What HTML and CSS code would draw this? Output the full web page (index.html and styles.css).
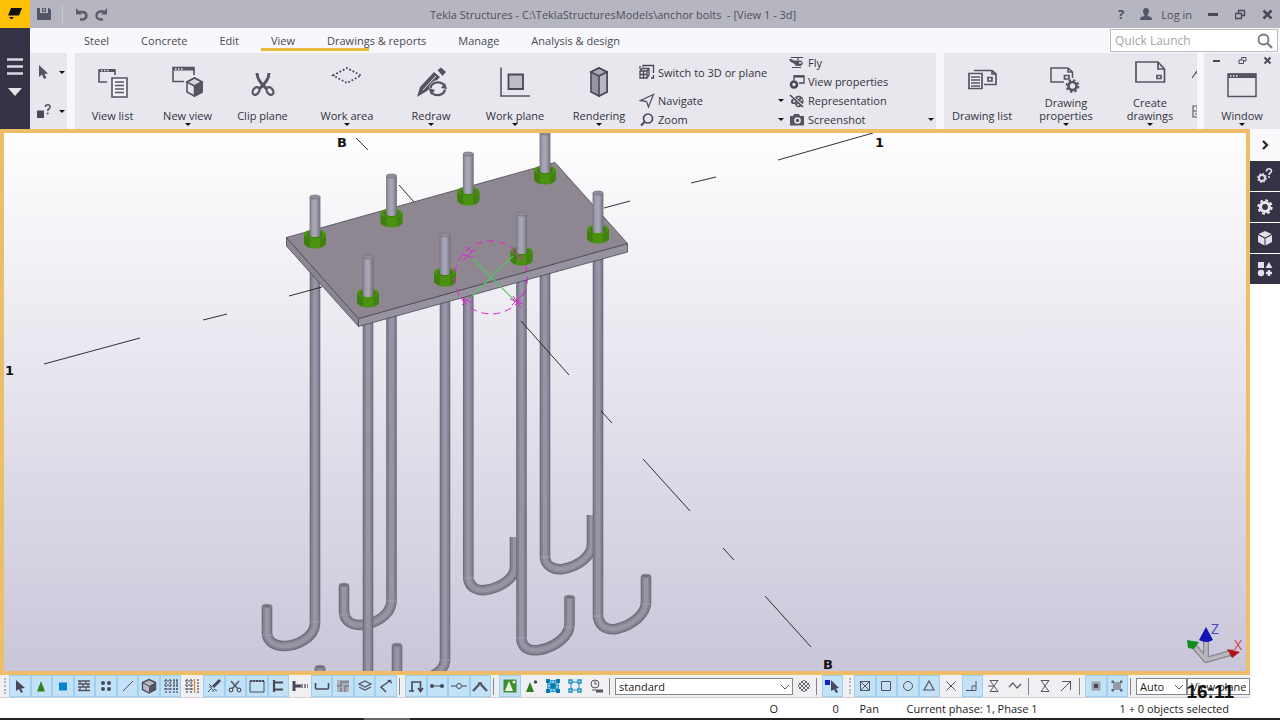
FILE: index.html
```html
<!DOCTYPE html>
<html lang="en">
<head>
<meta charset="utf-8">
<title>Tekla Structures</title>
<link rel="stylesheet" href="styles.css">
</head>
<body>
<header class="top">
  <div class="rail">
    <div class="logo"><svg width="16" height="14" viewBox="0 0 16 14"><path d="M4 1H15L12 8.500H1Z M2 10H7L4.500 12.500Z" fill="#111"/></svg></div>
    <button class="menu" aria-label="Menu"><svg width="16" height="42" viewBox="0 0 16 42"><path d="M0 1.500H16M0 8.500H16M0 15.500H16" stroke="#d8d8e2" stroke-width="2.600"/><path d="M1 30H15L8 38Z" fill="#e4e4ec"/></svg></button>
  </div>
  <div class="head">
    <div class="titlebar">
      <div class="quick">
        <button aria-label="Save"><svg width="14" height="14" viewBox="0 0 14 14"><path d="M0 1H3V6H11V1H12L14 3V13H0Z M5 1H9V5H5Z" fill="#55556a"/><path d="M7 1.500V4" stroke="#b6b6c1" stroke-width="1.500"/></svg></button>
        <i class="tsep"></i>
        <button aria-label="Undo"><svg width="14" height="14" viewBox="0 0 14 14"><path d="M3 5H8A4 3.800 0 0 1 8 12.500H5" fill="none" stroke="#5c5c6c" stroke-width="2.400"/><path d="M1 1L1 7.500L7 7.500Z" fill="#5c5c6c"/></svg></button>
        <button aria-label="Redo"><svg width="14" height="14" viewBox="0 0 14 14"><path d="M10 4.500H7A4 4 0 0 0 6 12.500H9" fill="none" stroke="#5c5c6c" stroke-width="2.400"/><path d="M13 1L13 7.500L7 7.500Z" fill="#5c5c6c"/></svg></button>
      </div>
      <h1 class="title">Tekla Structures - C:\TeklaStructuresModels\anchor bolts&nbsp; - [View 1 - 3d]</h1>
      <div class="account">
        <button class="help">?</button>
        <button class="login"><svg width="12" height="12" viewBox="0 0 12 12"><path d="M6 0C8 0 9 1.500 9 3.500C9 5 8 6 7.500 7V8L11 9Q12 10 12 12H0Q0 10 1 9L4.500 8V7C4 6 3 5 3 3.500C3 1.500 4 0 6 0Z" fill="#55556a"/></svg><span>Log in</span></button>
        <button class="win" aria-label="Minimize"><svg width="11" height="11"><path d="M0 5.500H10" stroke="#484858" stroke-width="3"/></svg></button>
        <button class="win" aria-label="Restore"><svg width="11" height="11"><path d="M.5 4.500H6.500V9.500H.5ZM3.500 4V1.500H9.500V6.500H7" fill="none" stroke="#484858" stroke-width="1.400"/></svg></button>
        <button class="win" aria-label="Close"><svg width="11" height="11"><path d="M1.500 1.500L9.500 9.500M9.500 1.500L1.500 9.500" stroke="#484858" stroke-width="2.600"/></svg></button>
      </div>
    </div>
    <div class="tabbar">
      <nav class="tabs">
        <a href="#">Steel</a><a href="#">Concrete</a><a href="#">Edit</a><a href="#" class="on">View</a><a href="#">Drawings &amp; reports</a><a href="#">Manage</a><a href="#">Analysis &amp; design</a>
      </nav>
      <label class="search"><input type="text" placeholder="Quick Launch" aria-label="Quick Launch"><svg width="16" height="16" viewBox="0 0 16 16"><circle cx="6.500" cy="6.500" r="5" fill="none" stroke="#777784" stroke-width="1.800"/><path d="M10.500 10.500L15 15" stroke="#777784" stroke-width="2"/></svg></label>
    </div>
    <div class="ribbon">
      <div class="panel pick">
        <button aria-label="Select"><svg width="14" height="16" viewBox="0 0 14 16"><path d="M3 1L12 9.500L8.500 10L10.500 14L8 15L6 10.500L3 13Z" fill="#555562"/></svg><i class="arr"></i></button>
        <button aria-label="Inquire"><svg width="16" height="16" viewBox="0 0 16 16"><path d="M1 7.500H8V15H1Z" fill="#484858"/><path d="M9.500 4C9.500 1 14 1 14 4C14 6 11.700 5.500 11.700 8" fill="none" stroke="#555562" stroke-width="1.600"/><circle cx="11.700" cy="10.500" r="1" fill="#555562"/></svg><i class="arr"></i></button>
      </div>
      <div class="panel views">
        <div class="bigs three">
          <button class="big"><svg viewBox="0 0 36 36"><g fill="none" stroke="#555562" stroke-width="1.600"><path d="M12 21H4V9H20V14"/><path d="M4 9.500H20" stroke-width="3"/><path d="M6 9.500H15" stroke="#e8e7ee" stroke-dasharray="1.500 1.500"/><path d="M17 17H32V36H17Z" fill="#f1f1f5"/><path d="M20 21H29M20 24.500H29M20 28H29M20 31.500H29"/></g></svg><span>View list</span><i></i></button>
          <button class="big"><svg viewBox="0 0 36 36"><g fill="none" stroke="#555562" stroke-width="1.600"><path d="M14 20.500H3V6.500H24V14"/><path d="M3 8H24" stroke-width="3"/><path d="M5 8H13" stroke="#e8e7ee" stroke-dasharray="1.500 1.500"/><path d="M24.500 17L32 21V31L24.500 35L17 31V21Z" fill="#e8e7ee"/><path d="M17 21L24.500 25L32 21L24.500 17Z" fill="#d6d6df"/><path d="M24.500 25L32 21V31L24.500 35Z" fill="#555562"/></g></svg><span>New view</span><i class="arr"></i></button>
          <button class="big"><svg viewBox="0 0 36 36"><g fill="none" stroke="#555562"><path d="M12 12C12 17 16 23 22 28M24 12C24 17 20 23 14 28" stroke-width="3"/><ellipse cx="11" cy="30" rx="3" ry="4.200" stroke-width="2.200" transform="rotate(35 11 30)"/><ellipse cx="25" cy="30" rx="3" ry="4.200" stroke-width="2.200" transform="rotate(-35 25 30)"/></g></svg><span>Clip plane</span><i></i></button>
        </div>
        <div class="bigs four">
          <button class="big"><svg viewBox="0 0 36 36"><path d="M4 14.500L18 7L32 14.500L18 22Z" fill="none" stroke="#484858" stroke-width="1.800" stroke-dasharray="1.800 1.900"/></svg><span>Work area</span><i class="arr"></i></button>
          <button class="big"><svg viewBox="0 0 36 36"><path d="M4 36L7 26L21 11L27 16L14 30Z" fill="#555562"/><path d="M10 29L23 15" stroke="#e8e7ee" stroke-width="1"/><path d="M24.500 9L28 6.500L33 11L29.500 15Z" fill="#555562"/><circle cx="25" cy="28" r="9" fill="#e8e7ee"/><path d="M17.500 27A7.500 6.500 0 0 1 31 24M32 28.500A7.500 6.500 0 0 1 19 32" fill="none" stroke="#555562" stroke-width="2.200"/><path d="M28 27L34 28L32 22Z M22 29L15.500 27L18 34Z" fill="#555562"/></svg><span>Redraw</span><i class="arr"></i></button>
          <button class="big"><svg viewBox="0 0 36 36"><path d="M4 6.500V35H33" fill="none" stroke="#555562" stroke-width="1.600"/><path d="M11.500 13.500H26V28H11.500Z" fill="#bcbcc8" stroke="#484858" stroke-width="1.800"/></svg><span>Work plane</span><i class="arr"></i></button>
          <button class="big"><svg viewBox="0 0 36 36"><g stroke="#484858" stroke-width="1.600"><path d="M18 7L26 11V31L18 35L10 31V11Z" fill="#9494a3"/><path d="M18 7L26 11L18 15L10 11Z" fill="#aaaab7"/><path d="M18 15L26 11V31L18 35Z" fill="#b7b7c3"/></g></svg><span>Rendering</span><i class="arr"></i></button>
        </div>
        <div class="smalls nav">
          <button class="small tall"><svg viewBox="0 0 16 16"><g fill="none" stroke="#484858" stroke-width="1.300"><path d="M4 3V1.500H14.500V9M14.500 11V14H12"/><path d="M1 7H8V14H1ZM1 7L3 4.500H10V11L8 14M8 7L10 4.500"/><path d="M1 10.500H8M4.500 7V14M1 5V2"/></g></svg><span>Switch to 3D or plane</span></button>
          <button class="small"><svg viewBox="0 0 16 16"><path d="M14.500 1.500L9.500 14L7.500 8.500L1.500 7.500Z" fill="none" stroke="#555562" stroke-width="1.300"/></svg><span>Navigate</span><i class="arr"></i></button>
          <button class="small"><svg viewBox="0 0 16 16"><circle cx="9" cy="6.500" r="4.500" fill="none" stroke="#484858" stroke-width="1.700"/><path d="M5.500 10L2 13.500" stroke="#484858" stroke-width="2.200"/></svg><span>Zoom</span><i class="arr"></i></button>
        </div>
        <div class="smalls more">
          <button class="small"><svg viewBox="0 0 16 16"><path d="M2 2.500H14M9 2V5" stroke="#484858" stroke-width="1.200"/><path d="M1 4L5 6H12Q15 8 12 10.500H7L5 8L1 6ZM3 12.500H12" fill="#555562" stroke="#555562"/><path d="M10 7H12.500V8.500H10Z" fill="#e8e7ee"/></svg><span>Fly</span></button>
          <button class="small"><svg viewBox="0 0 16 16"><path d="M5 6V2H15V9H10" fill="none" stroke="#484858" stroke-width="1.300"/><path d="M5 2.500H15" stroke="#484858" stroke-width="2"/><circle cx="5" cy="10.500" r="3" fill="none" stroke="#484858" stroke-width="2.600"/></svg><span>View properties</span></button>
          <button class="small"><svg viewBox="0 0 16 16"><path d="M8 3C12 2 15 5 14.500 9C14 13 11 15 8 14C6 13 7 11 5 11C2 11 1 9 3 6Z" fill="#555562"/><path d="M1 2L15 14" stroke="#e8e7ee" stroke-width="2.600"/><path d="M1 2L14 14" stroke="#484858" stroke-width="1.600"/><g fill="#e8e7ee"><circle cx="9.500" cy="5" r="1"/><circle cx="12.500" cy="7" r="1"/><circle cx="5" cy="8.500" r="1"/><circle cx="9" cy="12" r="1"/></g></svg><span>Representation</span></button>
          <button class="small"><svg viewBox="0 0 16 16"><path d="M1 4H4L5 2H10L11 4H15V13.500H1Z" fill="#555562"/><circle cx="8.500" cy="8.500" r="3.300" fill="#e8e7ee"/><circle cx="8.500" cy="8.500" r="1.700" fill="#555562"/></svg><span>Screenshot</span><i class="arr"></i></button>
        </div>
      </div>
      <div class="panel drawings">
        <button class="big list"><svg viewBox="0 0 36 36"><g fill="none" stroke="#555562" stroke-width="1.700"><path d="M10 9.500H28L32 13V23.500H20"/><path d="M5 12.500H18V27.500H5Z" fill="#f1f1f5"/><path d="M7 16H16M7 19H16M7 22H16M7 25H16" stroke-width="1.400"/><path d="M24 16.500H28V20H24ZM28 10V13H32"/></g></svg><span>Drawing list</span><i></i></button>
        <button class="big"><svg viewBox="0 0 36 36"><g fill="none" stroke="#555562" stroke-width="1.500"><path d="M16 21H3V7H20L24.500 11V17M20 7V11H24"/><path d="M16.500 14.500H21V18H16.500Z" stroke-width="1.700"/><circle cx="24.500" cy="25" r="4" stroke-width="2.700"/><circle cx="24.500" cy="25" r="6" stroke-width="1.800" stroke-dasharray="2.400 2.300"/></g></svg><span>Drawing<br>properties</span><i class="arr"></i></button>
        <button class="big"><svg viewBox="0 0 36 36"><g fill="none" stroke="#555562" stroke-width="1.700"><path d="M4 1H26L32.500 8V21H4ZM26 1V8H32"/><path d="M25 14.500H29V17.500H25Z"/></g></svg><span>Create<br>drawings</span><i class="arr"></i></button>
        <div class="cut"><svg width="7" height="16" viewBox="0 0 7 16"><path d="M0 11L5 4M3 6H7M5 3L7 1M5 7L7 9" fill="none" stroke="#555562" stroke-width="1.100"/></svg><svg width="7" height="16" viewBox="0 0 7 16"><path d="M7 3H1V14H7M1 8H7M3 11H7M4 5H7" fill="none" stroke="#555562" stroke-width="1.100"/></svg></div>
      </div>
      <div class="panel window">
        <div class="mdi">
          <button aria-label="Minimize view"><svg width="9" height="9"><path d="M1 5H8" stroke="#484858" stroke-width="2"/></svg></button>
          <button aria-label="Restore view"><svg width="9" height="9"><path d="M1 4H5.500V7.500H1ZM3.500 3.500V1.500H8V5H6" fill="none" stroke="#484858"/></svg></button>
          <button aria-label="Close view"><svg width="9" height="9"><path d="M1.500 1.500L7.500 7.500M7.500 1.500L1.500 7.500" stroke="#484858" stroke-width="2"/></svg></button>
        </div>
        <button class="big"><svg viewBox="0 0 36 36"><path d="M4 13H32V35.500H4Z" fill="none" stroke="#555562" stroke-width="1.500"/><path d="M4 12.500H32V17H4Z" fill="#555562"/><path d="M6 15H14" stroke="#e8e7ee" stroke-width="1.500" stroke-dasharray="1.500 1.500"/></svg><span>Window</span><i class="arr"></i></button>
      </div>
    </div>
  </div>
</header>
<main class="work">
  <div class="left">
    <section class="viewport" aria-label="View 1 - 3d">
      <svg class="scene">
        <defs>
          <g id="nut"><path d="M-11 -5V4A11 5.500 0 0 0 11 4V-5Z" fill="#4a9212"/><path d="M-11 -5V4A11 5.500 0 0 0 -5 8.500V-3Z" fill="#3f7f10"/><path d="M5 -3V8.500A11 5.500 0 0 0 11 4V-5Z" fill="#418211"/><ellipse cy="-5" rx="11" ry="4.500" fill="#4a9313"/><ellipse cy="-4.500" rx="8" ry="3.500" fill="#3d7a10"/></g>
          <linearGradient id="rod" x1="0" x2="1"><stop offset="0" stop-color="#76727f"/><stop offset=".25" stop-color="#a09dae"/><stop offset=".55" stop-color="#aaa7b8"/><stop offset=".8" stop-color="#8c8998"/><stop offset="1" stop-color="#6d6977"/></linearGradient>
          <g id="stud"><path d="M-5.400 -42V-4A5.400 2 0 0 0 5.400 -4V-42Z" fill="url(#rod)"/><ellipse cy="-42" rx="5.200" ry="2" fill="#918e9c" stroke="#777382" stroke-width=".8"/></g>
          <g id="back"><path d="M315 245V624C314 638 296 646 284 646C273 646 267 640 267 633V606"/><path d="M391.500 225V602C390 617 372 625 360 625C349 625 344 619 344 611V585"/><path d="M545 180V558C546 567 555 570 563 569C580 566 592 555 592 544V515"/><path d="M468.300 200V579C470 588 478 591 485 590C501 588 515 578 515 567V537"/></g>
          <g id="front"><path d="M320 676V667"/><path d="M397 676V645"/><path d="M368 300V680"/><path d="M445 280V661C444 669 438 673 430 677"/><path d="M521.500 260V640C523 650 532 651 539 650C556 647 569.500 636 569.500 624V597"/><path d="M598 240V617C600 628 609 630 616 629C634 625 646 613 646 602V576"/></g>
        </defs>
        <g transform="translate(-4 -133)">
          <g fill="none">
            <use href="#back" stroke="#6d6a78" stroke-width="10.600"/><use href="#back" stroke="#858191" stroke-width="8.400"/><use href="#back" stroke="#9794a5" stroke-width="4.500"/>
            <use href="#front" stroke="#6d6a78" stroke-width="10.600"/><use href="#front" stroke="#858191" stroke-width="8.400"/><use href="#front" stroke="#9794a5" stroke-width="4.500"/>
          </g>
          <g fill="#77737e" stroke="#9c99a8" stroke-width=".5"><ellipse cx="267" cy="606" rx="5" ry="2"/><ellipse cx="344" cy="585" rx="5" ry="2"/><ellipse cx="320" cy="667" rx="5" ry="2"/><ellipse cx="397" cy="645" rx="5" ry="2"/><ellipse cx="569.500" cy="597" rx="5" ry="2"/><ellipse cx="646" cy="576" rx="5" ry="2"/></g>
          <path d="M310 622H320M262 635H272M386 601H397M339 615H349M463 578H474M540 557H551M516 638H527M593 616H604M564 627H575M641 604H652M440 660H450" stroke="#aaa7b8" stroke-width=".7"/>
          <g stroke="#4a4652" stroke-width=".8" stroke-linejoin="round"><path d="M286.500 237.500L358.500 318.500V326.500L286.500 246Z" fill="#8a8692"/><path d="M358.500 318.500L627.500 243.500V252L358.500 326.500Z" fill="#9692a0"/><path d="M286.500 237.500L555 162.500L627.500 243.500L358.500 318.500Z" fill="#8e8791"/></g>
          <path d="M44 364L140 338M203 320L227 314M289 296L322 287M604 208L630 201M691 183L716 177M778 160L873 133M356 138L368 150M399 185L414 202M521 321L569 375M601 411L612 423M643 459L690 511M723 548L734 560M765 596L811 647" stroke="#1c1c20" stroke-width=".9"/>
          <use href="#nut" x="315" y="239"/><use href="#stud" x="315" y="239"/>
          <use href="#nut" x="391.500" y="218"/><use href="#stud" x="391.500" y="218"/>
          <use href="#nut" x="468.300" y="196"/><use href="#stud" x="468.300" y="196"/>
          <use href="#nut" x="545" y="175"/><use href="#stud" x="545" y="175"/>
          <use href="#nut" x="368" y="298"/><use href="#stud" x="368" y="299"/>
          <use href="#nut" x="445" y="277"/><use href="#stud" x="445" y="277"/>
          <use href="#nut" x="521.500" y="256"/><use href="#stud" x="521.500" y="256"/>
          <use href="#nut" x="598" y="234"/><use href="#stud" x="598" y="235"/>
          <path d="M469 255L517 303M513 256L469 299" stroke="#4fc95a" stroke-width="1.100"/>
          <g stroke="#e01fd6" fill="none"><circle cx="491" cy="277.500" r="36.500" stroke-dasharray="7 5"/><path d="M462 254L474 258M463 261L475 249M466 246L472 252M512 305L523 294M510 299L523 304M513 296L521 308M460 298L473 303M462 305L472 295M511 250L520 259"/></g>
          <g class="gridlabel"><text x="337" y="147">B</text><text x="823" y="669">B</text><text x="875" y="147">1</text><text x="5" y="375">1</text></g>
        </g>
      </svg>
      <svg class="triad" width="64" height="46" viewBox="0 0 64 46">
        <path d="M13 22L26 37L54 29M26 37V14" fill="none" stroke="#89868f" stroke-width="6" stroke-linejoin="round"/><path d="M13 22L26 37L54 29M26 37V14" fill="none" stroke="#b9b6c0" stroke-width="3.500" stroke-linejoin="round"/>
        <path d="M26 4L33 17Q26 21 19 17Z" fill="#1414b4"/><path d="M7 17L19 19L14 26L8 25Z" fill="#168a22"/><path d="M47 26L60 29L52 35Z" fill="#b31212"/>
        <text x="31" y="11" class="z">Z</text><text x="54" y="27" class="x">X</text>
      </svg>
    </section>
    <div class="toolbar">
      <i class="grip"></i>
      <div class="tools g18">
        <button class="on" aria-label="Select all"><svg viewBox="0 0 16 16"><path d="M4 2L13 10L9 10.500L11 14L9 15L7 11L4 13Z" fill="#484858"/></svg></button>
        <button class="on" aria-label="Components"><svg viewBox="0 0 16 16"><path d="M8 3L12 13.500H4Z" fill="#30811c"/></svg></button>
        <button class="on" aria-label="Parts"><svg viewBox="0 0 16 16"><path d="M4 4.500H12V12.500H4Z" fill="#0784cf"/></svg></button>
        <button class="on" aria-label="Surfaces"><svg viewBox="0 0 16 16"><path d="M2 3H14M2 6H14M2 9H14M2 12.500H14M4 3V6M10 3V6M7 6V9M12 6V9M4 9V12M10 9V12" stroke="#555562" fill="none" stroke-width="1.300"/></svg></button>
        <button class="on" aria-label="Points"><svg viewBox="0 0 16 16"><g fill="#484858"><circle cx="5" cy="5" r="2"/><circle cx="11" cy="5" r="2"/><circle cx="5" cy="11" r="2"/><circle cx="11" cy="11" r="2"/></g></svg></button>
        <button class="on" aria-label="Lines"><svg viewBox="0 0 16 16"><path d="M3 13L13 3" stroke="#555562"/></svg></button>
        <button class="on" aria-label="Reference models"><svg viewBox="0 0 16 16"><path d="M8 1.500L14.500 4.500V11.500L8 15L1.500 11.500V4.500Z" fill="#b9bac6" stroke="#484858" stroke-width="1.400"/><path d="M8 8L14.500 4.500V11.500L8 15Z" fill="#555562"/><path d="M1.500 4.500L8 8" stroke="#484858"/></svg></button>
        <button class="on" aria-label="Grids"><svg viewBox="0 0 16 16"><path d="M1 3H15M1 7H15M1 11H15M3 1V15M7 1V15M11 1V15M14 1V15" stroke="#484858" stroke-width="1.200" stroke-dasharray="2 1"/></svg></button>
        <button aria-label="Grid line"><svg viewBox="0 0 16 16"><path d="M1 3H11M1 7H11M1 11H11M3 1V15M7 1V15M14 1V15" stroke="#484858" stroke-width="1.200" stroke-dasharray="2 1"/><path d="M10.500 1V15" stroke="#d58b2a" stroke-width="1.300"/></svg></button>
        <button class="on" aria-label="Welds"><svg viewBox="0 0 16 16"><path d="M7 9L14 2" stroke="#484858" stroke-width="3"/><path d="M6 10L2 14M3 9H6M7 11V14M3 6L6 9M8 11L11 13" stroke="#484858"/></svg></button>
        <button class="on" aria-label="Cuts"><svg viewBox="0 0 16 16"><path d="M4 3L11 11M12 3L5 11" stroke="#555562" stroke-width="1.500"/><circle cx="4" cy="12" r="1.800" fill="none" stroke="#555562" stroke-width="1.200"/><circle cx="12" cy="12" r="1.800" fill="none" stroke="#555562" stroke-width="1.200"/></svg></button>
        <button class="on" aria-label="Views"><svg viewBox="0 0 16 16"><path d="M1 3H15V14H1Z" fill="none" stroke="#484858"/><path d="M1 3H15" stroke="#484858" stroke-width="2" stroke-dasharray="2 1"/></svg></button>
        <button class="on" aria-label="Fittings"><svg viewBox="0 0 16 16"><path d="M4 2V14M4 4.500H13M4 11.500H13" stroke="#484858" stroke-width="2.200"/></svg></button>
        <button aria-label="Bolts"><svg viewBox="0 0 16 16"><path d="M2 3V13M2 8H9" stroke="#484858" stroke-width="3"/><path d="M9 8H16" stroke="#888894" stroke-width="4" stroke-dasharray="2 1"/></svg></button>
        <button class="on" aria-label="Rebar"><svg viewBox="0 0 16 16"><path d="M1.500 5V10Q1.500 11 3 11H13Q14.500 11 14.500 10V5" fill="none" stroke="#484858" stroke-width="1.600"/></svg></button>
        <button class="on" aria-label="Pours"><svg viewBox="0 0 16 16"><path d="M2 2H14V14H2Z" fill="#aab0b8"/><path d="M14 4H6V8H2M14 8H10V14M6 14V10" fill="none" stroke="#7c7e8a" stroke-width="1.500"/></svg></button>
        <button class="on" aria-label="Layers"><svg viewBox="0 0 16 16"><path d="M8 3L14 6L8 9L2 6ZM2 9L8 12L14 9" fill="none" stroke="#555562" stroke-width="1.300"/></svg></button>
        <button class="on" aria-label="Distances"><svg viewBox="0 0 16 16"><path d="M13 2L3 9L8 14M10 2L14 5" fill="none" stroke="#484858" stroke-width="1.400"/></svg></button>
      </div>
      <i class="sep"></i>
      <div class="tools g4">
        <button class="on" aria-label="Select components"><svg viewBox="0 0 16 16"><path d="M4 13V4H12.500V13M1 13H6M10 10L12.500 13.500L15 10" fill="none" stroke="#484858" stroke-width="1.600"/></svg></button>
        <button class="on" aria-label="Select objects in components"><svg viewBox="0 0 16 16"><path d="M3 8H13" stroke="#484858"/><circle cx="3" cy="8" r="2" fill="#484858"/><circle cx="13" cy="8" r="2" fill="#484858"/></svg></button>
        <button class="on" aria-label="Select assemblies"><svg viewBox="0 0 16 16"><path d="M0 8H5M11 8H16" stroke="#484858"/><circle cx="8" cy="8" r="2.500" fill="none" stroke="#484858"/></svg></button>
        <button class="on" aria-label="Select objects in assemblies"><svg viewBox="0 0 16 16"><path d="M1 13L7 6.500M6 5.500H10M9 6.500L15 13" fill="none" stroke="#555562" stroke-width="2.400"/></svg></button>
      </div>
      <i class="sep"></i>
      <div class="tools g5">
        <button class="on" aria-label="Component objects"><svg viewBox="0 0 16 16"><path d="M1.500 1.500H14.500V14.500H1.500Z" fill="#438c2e"/><path d="M3 13L7 3L11 13Z" fill="#e8f3e3"/><circle cx="12" cy="4" r="1.500" fill="#e8f3e3"/></svg></button>
        <button aria-label="Component"><svg viewBox="0 0 16 16"><path d="M7 4L11 14H3Z" fill="#30811c"/><circle cx="12.500" cy="4" r="1.700" fill="#484858"/></svg></button>
        <button aria-label="Assembly objects"><svg viewBox="0 0 16 16"><path d="M2 2H14V14H2Z" fill="#35a3d2"/><path d="M4 4H12V12H4Z" fill="none" stroke="#f0f0f2" stroke-dasharray="2 1"/><path d="M5.500 5.500H10.500V10.500H5.500Z" fill="#087ab0"/><path d="M1 1H5V5H1ZM11 1H15V5H11ZM1 11H5V15H1ZM11 11H15V15H11Z" fill="#087ab0"/></svg></button>
        <button aria-label="Assembly"><svg viewBox="0 0 16 16"><path d="M4 4H12V12H4Z" fill="none" stroke="#168ec2"/><path d="M2 2H5V5H2ZM11 2H14V5H11ZM2 11H5V14H2ZM11 11H14V14H11Z" fill="#f0f0f2" stroke="#168ec2" stroke-width="1.400"/></svg></button>
        <button aria-label="Task"><svg viewBox="0 0 16 16"><circle cx="7" cy="6" r="4" fill="none" stroke="#555562"/><path d="M7 3V6H9M4 12H8" fill="none" stroke="#555562"/><path d="M8 13H15" stroke="#555562" stroke-width="3"/></svg></button>
      </div>
      <i class="sep"></i>
      <div class="pickbox wide"><select aria-label="Selection filter"><option>standard</option></select><svg width="10" height="8"><path d="M1 2L5 6L9 2" fill="none" stroke="#555"/></svg></div>
      <div class="tools g1"><button aria-label="Filter"><svg viewBox="0 0 16 16"><path d="M3 5L11 13M5 3L13 11M2 8L8 14M8 2L14 8M3 11L11 3M5 13L13 5M2 8L8 2M8 14L14 8" stroke="#555562" stroke-width=".9"/></svg></button></div>
      <i class="sep"></i>
      <div class="tools g1"><button class="on" aria-label="Smart select"><svg viewBox="0 0 16 16"><path d="M0 2H5V7H0Z" fill="#1421cb"/><path d="M6 2L14 10L11 10.500L13 14L11 15L9 11.500L6 13Z" fill="#484858"/></svg></button></div>
      <i class="grip mid"></i>
      <div class="tools g8">
        <button class="on" aria-label="Snap to points"><svg viewBox="0 0 16 16"><path d="M3.500 3.500H12.500V12.500H3.500ZM3.500 3.500L12.500 12.500M12.500 3.500L3.500 12.500" fill="none" stroke="#555562"/></svg></button>
        <button class="on" aria-label="Snap to end points"><svg viewBox="0 0 16 16"><path d="M3.500 3.500H12.500V12.500H3.500Z" fill="none" stroke="#555562"/></svg></button>
        <button class="on" aria-label="Snap to centers"><svg viewBox="0 0 16 16"><circle cx="8" cy="8" r="4.500" fill="none" stroke="#555562"/></svg></button>
        <button class="on" aria-label="Snap to midpoints"><svg viewBox="0 0 16 16"><path d="M8 3L13 12H3Z" fill="none" stroke="#555562" stroke-width="1.200"/></svg></button>
        <button aria-label="Snap to intersections"><svg viewBox="0 0 16 16"><path d="M3.500 3.500L12.500 12.500M12.500 3.500L3.500 12.500" stroke="#555562"/></svg></button>
        <button class="on" aria-label="Snap perpendicular"><svg viewBox="0 0 16 16"><path d="M2 12.500H12V3M8 12V8H12" fill="none" stroke="#555562"/></svg></button>
        <button aria-label="Snap to extensions"><svg viewBox="0 0 16 16"><path d="M4 2.500H12L4 13.500H12L4 2.500M2 8H7" fill="none" stroke="#555562"/></svg></button>
        <button aria-label="Snap free"><svg viewBox="0 0 16 16"><path d="M2 9L6 5L10 10L14 6" fill="none" stroke="#555562" stroke-width="1.200"/></svg></button>
      </div>
      <i class="sep"></i>
      <div class="tools g2">
        <button aria-label="Snap to nearest"><svg viewBox="0 0 16 16"><path d="M4 2.500H12L4 13.500H12L4 2.500" fill="none" stroke="#555562"/></svg></button>
        <button aria-label="Snap to lines"><svg viewBox="0 0 16 16"><path d="M3 13L12 4M4 3.500H12.500V12" fill="none" stroke="#555562"/></svg></button>
      </div>
      <i class="sep"></i>
      <div class="tools g2">
        <button class="on" aria-label="Reference points"><svg viewBox="0 0 16 16"><path d="M3.500 3.500H12.500V12.500H3.500Z" fill="#9aa3ae"/><path d="M6 6H10V10H6Z" fill="#484858"/></svg></button>
        <button class="on" aria-label="Geometry points"><svg viewBox="0 0 16 16"><path d="M4 4H12V12H4Z" fill="#949ba8"/><path d="M2.500 2.500H5V5H2.500ZM11 2.500H13.500V5H11ZM2.500 11H5V13.500H2.500ZM11 11H13.500V13.500H11Z" fill="#626b7c"/></svg></button>
      </div>
      <i class="sep"></i>
      <div class="pickbox depth"><select aria-label="Snap depth"><option>Auto</option></select><svg width="10" height="8"><path d="M1 2L5 6L9 2" fill="none" stroke="#555"/></svg></div>
      <div class="pickbox plane"><select aria-label="Plane type"><option>View plane</option></select></div>
      <time class="clock">16:11</time>
    </div>
  </div>
  <aside class="side">
    <button class="open" aria-label="Expand"><svg width="16" height="16"><path d="M6 4L10 8L6 12" fill="none" stroke="#222" stroke-width="2.200"/></svg></button>
    <button aria-label="Property help"><svg width="16" height="16"><circle cx="5" cy="10" r="3" fill="none" stroke="#dedeea" stroke-width="2"/><circle cx="5" cy="10" r="4.500" fill="none" stroke="#dedeea" stroke-dasharray="1.800 1.700"/><path d="M9.500 3.500C9.500 0 14.500 0 14.500 3C14.500 5 12 4.500 12 7" fill="none" stroke="#dedeea" stroke-width="1.600"/><circle cx="12" cy="9" r="1" fill="#dedeea"/></svg></button>
    <button aria-label="Properties"><svg width="16" height="16"><circle cx="8" cy="8" r="4.500" fill="none" stroke="#e6e6ef" stroke-width="3.200"/><circle cx="8" cy="8" r="6.700" fill="none" stroke="#e6e6ef" stroke-width="2" stroke-dasharray="2.900 2.360"/></svg></button>
    <button aria-label="Reference models"><svg width="16" height="16"><path d="M8 1L14.500 4L8 7.500L1.500 4ZM1 5L7.500 8.500V15.500L1 12ZM15 5L8.500 8.500V15.500L15 12Z" fill="#e1e1ec"/></svg></button>
    <button aria-label="Applications"><svg width="16" height="16"><path d="M1 1H7V7H1ZM12 1L15.500 7H8.500Z" fill="#e1e1ec"/><circle cx="4" cy="12" r="3.200" fill="#e1e1ec"/><path d="M12 9V15M9 12H15" stroke="#e1e1ec" stroke-width="2.400"/></svg></button>
  </aside>
</main>
<footer class="status"><span class="o">O</span><span class="n">0</span><span class="pan">Pan</span><span class="phase">Current phase: 1, Phase 1</span><span class="sel">1 + 0 objects selected</span></footer>
<div class="edge"></div>
</body>
</html>
```
FILE: styles.css
```css
* { box-sizing: border-box; }
body { margin: 0; height: 100vh; display: flex; flex-direction: column; overflow: hidden; background: #fdfdfe; font-family: "Open Sans", "Noto Sans", sans-serif; font-size: 11px; color: #33333d; }
button { margin: 0; padding: 0; border: 0; background: none; font: inherit; color: inherit; display: flex; align-items: center; justify-content: center; }
svg { display: block; flex: none; }
.top { display: flex; flex: none; }
.rail { width: 30px; display: flex; flex-direction: column; }
.logo { height: 28px; background: #fdc007; display: flex; align-items: center; justify-content: center; }
.menu { flex: 1; background: #343345; }
.head { flex: 1; min-width: 0; background: #f8f8fc; }
.titlebar { height: 28px; background: #b6b6c1; display: flex; align-items: center; padding: 0 7px; color: #50505e; }
.quick { display: flex; align-items: center; gap: 5px; }
.tsep { width: 1px; height: 20px; margin: 0 7px 0 6px; background: #c9c9d2; }
.title { flex: 1; margin: 0; text-align: center; font-size: 11px; font-weight: 400; white-space: nowrap; }
.account { display: flex; align-items: center; gap: 16px; }
.help { font-size: 13px; font-weight: 700; }
.login { gap: 9px; }
.tabbar { height: 25px; display: flex; align-items: center; justify-content: space-between; padding: 0 2px 0 38px; }
.tabs { display: flex; }
.tabs a { position: relative; padding: 0 16px; line-height: 25px; color: #484854; text-decoration: none; white-space: nowrap; }
.tabs .on::after { content: ""; position: absolute; left: 6px; bottom: 2px; width: 108px; height: 3px; background: #e5bb38; }
.search { width: 168px; height: 23px; display: flex; align-items: center; padding: 0 4px; background: #fff; border: 1px solid #bcbcc5; }
.search input { flex: 1; min-width: 0; padding: 0; border: 0; outline: 0; background: none; font: inherit; font-size: 12px; }
.search input::placeholder { color: #a5a5ad; }
.ribbon { height: 76px; display: flex; gap: 8px; }
.panel { background: #e8e7ee; display: flex; overflow: hidden; }
.pick { width: 37px; flex-direction: column; justify-content: space-between; padding: 11px 0 10px 6px; }
.pick button { justify-content: space-between; padding-right: 2px; }
.arr { width: 0; height: 0; border: 3px solid transparent; border-top-color: #111; border-bottom: 0; }
.views { flex: 1; gap: 5px; }
.bigs { display: grid; grid-auto-flow: column; grid-auto-columns: 1fr; }
.three { width: 225px; }
.four { width: 336px; }
.big { flex-direction: column; justify-content: space-between; padding: 8px 0 1px; line-height: 13px; white-space: nowrap; }
.big svg { width: 36px; height: 36px; overflow: visible; margin-bottom: -10px; }
.big span { margin-top: auto; margin-bottom: 1px; }
.big i { height: 5px; }
.big .arr { height: 0; margin-bottom: 2px; }
.smalls { display: grid; grid-template-rows: repeat(4, 19px); margin-left: -7px; }
.nav { width: 152px; }
.more { flex: 1; }
.small { justify-content: flex-start; gap: 3px; padding-right: 2px; white-space: nowrap; }
.nav .small { padding-right: 7px; }
.small svg { width: 16px; height: 16px; }
.small .arr { margin-left: auto; }
.tall { grid-row: span 2; }
.drawings { width: 253px; }
.drawings .big { width: 84px; }
.drawings .list { width: 76px; margin-right: 4px; }
.cut { width: 5px; display: flex; flex-direction: column; justify-content: space-between; padding: 14px 0 10px; }
.window { width: 76px; margin-left: -1px; flex-direction: column; position: relative; }
.window .big { flex: 1; }
.mdi { position: absolute; top: 3px; left: 8px; right: 8px; display: flex; justify-content: space-between; }
.work { flex: 1; min-height: 0; display: flex; }
.left { flex: 1; min-width: 0; display: flex; flex-direction: column; }
.viewport { position: relative; flex: 1; min-height: 0; border: 4px solid #eebd68; background: linear-gradient(#fefefe, #cac6da); }
.scene { width: 100%; height: 100%; }
.gridlabel { font: bold 13px "DejaVu Sans", sans-serif; fill: #111; }
.triad { position: absolute; right: 2px; bottom: 2px; overflow: visible; font: 14px "Open Sans", sans-serif; }
.z { fill: #4848c4; }
.x { fill: #cf3d50; }
.toolbar { position: relative; height: 23px; display: flex; align-items: center; background: #f0f0f2; border-bottom: 1px solid #cfcfd4; }
.grip { width: 2px; height: 16px; margin: 0 3px 0 4px; border-left: 2px dotted #b5b5bd; }
.mid { margin-left: 6px; }
.sep { width: 1px; height: 17px; margin: 0 5px 0 2px; background: #85858f; }
.tools { height: 22px; display: grid; grid-auto-flow: column; grid-auto-columns: 1fr; }
.tools button { border: 1px solid transparent; }
.tools .on { background: #c3e2f8; border-color: #9fd0f1; }
.tools svg { width: 16px; height: 16px; }
.g18 { width: 388px; }
.g4 { width: 86px; }
.g5 { width: 108px; }
.g1 { width: 21px; }
.g8 { width: 172px; }
.g2 { width: 43px; }
.pickbox { position: relative; height: 17px; }
.pickbox select { width: 100%; height: 100%; padding: 0 3px; appearance: none; border: 1px solid #85858c; border-radius: 0; background: #fff; font: inherit; color: #222; }
.pickbox svg { position: absolute; right: 3px; top: 5px; }
.wide { flex: 1; }
.depth { width: 51px; }
.plane { width: 63px; }
.clock { position: absolute; right: 16px; top: 6px; font: bold 19px "Liberation Sans", sans-serif; color: #111; }
.side { width: 30px; display: flex; flex-direction: column; gap: 1px; background: #fff; }
.side button { height: 30px; background: #343345; }
.side .open { height: 31px; background: #fafafd; }
.status { height: 20px; display: flex; justify-content: flex-end; align-items: center; background: #fff; color: #222; white-space: nowrap; padding-right: 51px; }
.o { width: 63px; }
.n { width: 27px; }
.pan { width: 47px; }
.phase { width: 213px; }
.edge { height: 2px; background: linear-gradient(90deg, #222226 364px, #66666c 364px, #66666c 410px, #222226 410px); }
```
